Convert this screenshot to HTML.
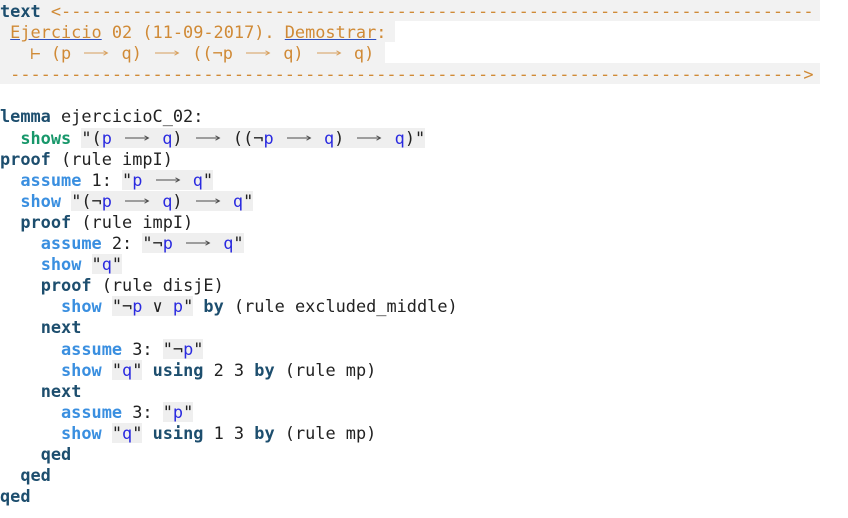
<!DOCTYPE html>
<html><head><meta charset="utf-8"><style>
body{margin:0;background:#fff;width:848px;height:518px;overflow:hidden}
pre{margin:0;font-family:"DejaVu Sans Mono","Liberation Mono",monospace;font-size:16.9px;line-height:21.1px;color:#222;position:relative;top:1px}
.a{display:inline-block;width:30px;height:10px;vertical-align:1px}
.c{color:#d08a36}
.u{text-decoration:underline;text-decoration-color:#3050c0}
.k{color:#1d4e6e;font-weight:bold}
.g{color:#17976a;font-weight:bold}
.b{color:#3a8fe0;font-weight:bold}
.s{background:#efefef}
.v{color:#2a2ae0}
.bg{position:absolute;left:0;top:0;width:820px;height:84px;background:#f2f2f2}
.w1{position:absolute;left:395px;top:21px;width:425px;height:21px;background:#fff}
.w2{position:absolute;left:385px;top:42px;width:435px;height:21px;background:#fff}
</style></head><body>
<svg width="0" height="0" style="position:absolute"><symbol id="ar" viewBox="0 0 30 10"><path d="M3 5H26M22.5 2.8L26.5 5L22.5 7.2" fill="none" stroke="currentColor" stroke-width="0.9" opacity="0.8"/></symbol></svg>
<div class="bg"></div><div class="w1"></div><div class="w2"></div>
<pre><span class="k">text</span> <span class="c">&lt;--------------------------------------------------------------------------</span>
<span class="c"> <span class="u">Ejercicio</span> 02 (11-09-2017). <span class="u">Demostrar</span>:</span>
<span class="c">   ⊢ (p <svg class="a"><use href="#ar"/></svg> q) <svg class="a"><use href="#ar"/></svg> ((¬p <svg class="a"><use href="#ar"/></svg> q) <svg class="a"><use href="#ar"/></svg> q)</span>
<span class="c"> ------------------------------------------------------------------------------&gt;</span>

<span class="k">lemma</span> ejercicioC_02:
  <span class="g">shows</span> <span class="s">"(<span class="v">p</span> <svg class="a"><use href="#ar"/></svg> <span class="v">q</span>) <svg class="a"><use href="#ar"/></svg> ((¬<span class="v">p</span> <svg class="a"><use href="#ar"/></svg> <span class="v">q</span>) <svg class="a"><use href="#ar"/></svg> <span class="v">q</span>)"</span>
<span class="k">proof</span> (rule impI)
  <span class="b">assume</span> 1: <span class="s">"<span class="v">p</span> <svg class="a"><use href="#ar"/></svg> <span class="v">q</span>"</span>
  <span class="b">show</span> <span class="s">"(¬<span class="v">p</span> <svg class="a"><use href="#ar"/></svg> <span class="v">q</span>) <svg class="a"><use href="#ar"/></svg> <span class="v">q</span>"</span>
  <span class="k">proof</span> (rule impI)
    <span class="b">assume</span> 2: <span class="s">"¬<span class="v">p</span> <svg class="a"><use href="#ar"/></svg> <span class="v">q</span>"</span>
    <span class="b">show</span> <span class="s">"<span class="v">q</span>"</span>
    <span class="k">proof</span> (rule disjE)
      <span class="b">show</span> <span class="s">"¬<span class="v">p</span> ∨ <span class="v">p</span>"</span> <span class="k">by</span> (rule excluded_middle)
    <span class="k">next</span>
      <span class="b">assume</span> 3: <span class="s">"¬<span class="v">p</span>"</span>
      <span class="b">show</span> <span class="s">"<span class="v">q</span>"</span> <span class="k">using</span> 2 3 <span class="k">by</span> (rule mp)
    <span class="k">next</span>
      <span class="b">assume</span> 3: <span class="s">"<span class="v">p</span>"</span>
      <span class="b">show</span> <span class="s">"<span class="v">q</span>"</span> <span class="k">using</span> 1 3 <span class="k">by</span> (rule mp)
    <span class="k">qed</span>
  <span class="k">qed</span>
<span class="k">qed</span></pre>
</body></html>
